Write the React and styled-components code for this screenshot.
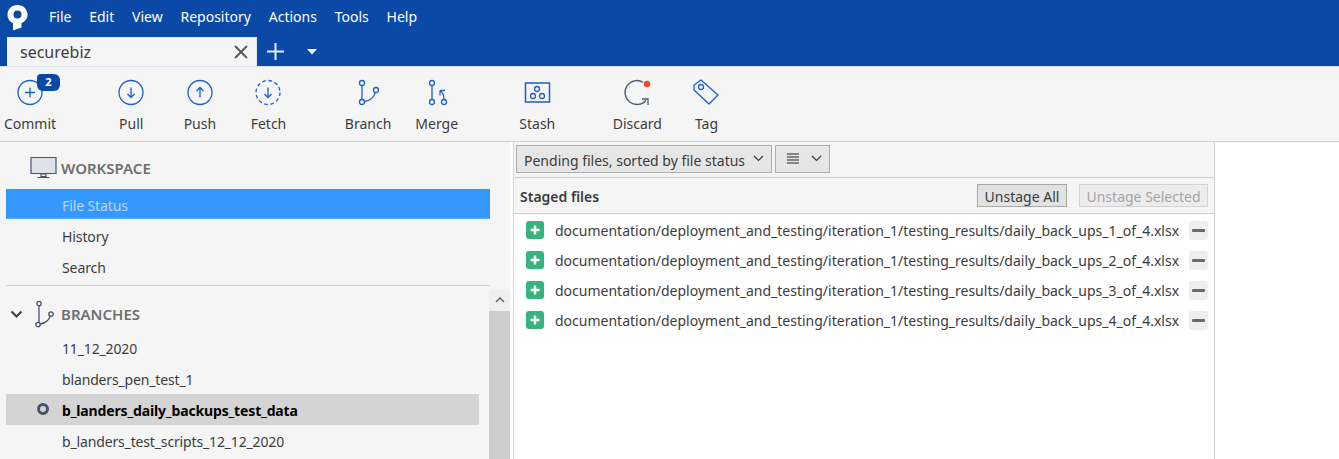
import React from "react";
import styled, { createGlobalStyle } from "styled-components";

const Global = createGlobalStyle`
  html, body { margin: 0; padding: 0; height: 100%; overflow: hidden; background: #fff; }
  #root { height: 459px; width: 1339px; overflow: hidden; }
  * { box-sizing: border-box; }
  body { font-family: "Noto Sans", "Open Sans", sans-serif; font-size: 14px; color: #3c3c3c; }
`;

const Shell = styled.div`display:flex;flex-direction:column;width:1339px;height:459px;overflow:hidden;`;
const TitleBar = styled.div`background:#0a49a6;height:66px;flex:none;display:flex;flex-direction:column;`;
const MenuRow = styled.div`height:37px;display:flex;align-items:center;flex:none;`;
const Logo = styled.svg`width:21px;height:28px;margin:0 0 0 7px;flex:none;display:block;`;
const Menu = styled.nav`display:flex;gap:17.8px;margin-left:21px;padding-bottom:4px;color:#fff;font-size:14px;`;
const TabRow = styled.div`height:29px;display:flex;align-items:stretch;padding-left:7px;`;
const Tab = styled.div`width:250px;background:#f5f5f5;display:flex;align-items:center;justify-content:space-between;padding:0 7px 0 13px;font-size:16px;color:#3c3c3c;border-top:1px solid #dfe8f3;border-right:1px solid #dfe8f3;`;
const TabIcon = styled.svg`flex:none;display:block;`;
const TabTools = styled.div`display:flex;align-items:center;margin-left:9px;gap:22px;`;

const Toolbar = styled.div`height:76px;flex:none;background:#f5f5f5;border-top:1px solid #dbe3ee;border-bottom:1px solid #d0d0d0;display:flex;`;
const ToolGroup = styled.div`display:flex;margin-left:${p => p.$gap}px;`;
const Tool = styled.div`width:${p => p.$w || 68.6}px;display:flex;flex-direction:column;align-items:center;position:relative;padding-top:10px;font-size:14px;color:#3c3c3c;`;
const ToolIcon = styled.svg`width:30px;height:30px;display:block;margin-bottom:7px;fill:none;stroke:#1d5fc9;stroke-width:1.3;`;
const Badge = styled.span`position:absolute;left:37px;top:7px;width:23px;height:17px;border-radius:4px 6px 6px 6px;background:#0a49a6;color:#fff;font-size:11px;font-weight:700;line-height:16px;text-align:center;`;

const Body = styled.div`flex:1;display:flex;min-height:0;`;
const Sidebar = styled.aside`width:510px;flex:none;background:#f5f5f5;position:relative;padding-left:6px;overflow:hidden;`;
const WorkspaceHead = styled.div`height:47px;display:flex;align-items:center;padding:4px 0 0 24px;font-weight:600;font-size:15px;color:#6f6f6f;`;
const BranchHead = styled.div`height:36px;margin-top:10px;display:flex;align-items:center;padding-left:4px;font-weight:600;font-size:15px;color:#6f6f6f;`;
const HeadIcon = styled.svg`flex:none;display:block;margin-right:${p => p.$mr || 4}px;`;
const Chev = styled.svg`flex:none;display:block;margin-right:9px;`;
const NavItem = styled.div`height:31px;width:484px;display:flex;align-items:center;padding:3px 0 0 56px;font-size:14px;letter-spacing:-.1px;color:#3c3c3c;`;
const ActiveNav = styled(NavItem)`height:30px;background:#3399ff;color:#c3d3e6;border-bottom:1px solid #5aabff;`;
const Rule = styled.hr`border:0;border-top:1px solid #cfcfcf;margin:4px 0 0;width:484px;`;
const BranchItem = styled(NavItem)`width:473px;position:relative;padding-top:2px;letter-spacing:-.15px;`;
const Current = styled(BranchItem)`background:#d4d4d4;font-weight:700;color:#000;`;
const Dot = styled.span`position:absolute;left:31px;top:9px;width:12px;height:12px;border-radius:50%;border:3px solid #47526b;`;
const Scroll = styled.div`position:absolute;left:489px;top:147px;width:21px;bottom:0;display:flex;flex-direction:column;`;
const ScrollBtn = styled.div`height:22px;background:#f0f0f0;display:flex;align-items:center;justify-content:center;`;
const ScrollThumb = styled.div`flex:1;background:#cdcdcd;`;

const Main = styled.main`width:702px;flex:none;margin-left:3px;display:flex;flex-direction:column;border-left:1px solid #d8d8d8;border-right:1px solid #d0d0d0;`;
const FilterBar = styled.div`height:36px;flex:none;background:#f5f5f5;border-bottom:1px solid #d0d0d0;display:flex;align-items:center;gap:3px;padding:0 0 2px 2px;`;
const Select = styled.div`height:28px;background:#e6e6e6;border:1px solid #aeaeae;display:flex;align-items:center;font-size:14px;color:#3c3c3c;width:${p => p.$w}px;padding:0 7px 0 ${p => p.$pl || 7}px;justify-content:space-between;`;
const SelectText = styled.span`padding-top:3px;`;
const StagedHead = styled.div`height:36px;flex:none;background:#f5f5f5;border-bottom:1px solid #d0d0d0;display:flex;align-items:center;padding:0 6px 0 6px;`;
const StagedTitle = styled.div`font-weight:600;font-size:14px;color:#3c3c3c;flex:1;padding-top:2px;`;
const Btn = styled.div`height:23px;display:flex;align-items:center;justify-content:center;padding-top:2px;font-size:14px;width:${p => p.$w}px;margin-left:${p => p.$ml || 0}px;border:1px solid ${p => p.$off ? "#d4d4d4" : "#a8a8a8"};background:${p => p.$off ? "#ececec" : "#e2e2e2"};color:${p => p.$off ? "#a5a5a5" : "#3c3c3c"};`;
const Files = styled.div`flex:1;background:#fff;padding-top:1px;`;
const FileRow = styled.div`height:30px;display:flex;align-items:center;padding-left:12px;`;
const AddIcon = styled.svg`flex:none;display:block;width:18px;height:18px;`;
const FileName = styled.div`font-size:14px;color:#3c3c3c;margin-left:11px;width:634px;white-space:nowrap;`;
const Minus = styled.div`width:19px;height:19px;border-radius:3px;background:#eeeeee;display:flex;align-items:center;justify-content:center;flex:none;&::before{content:"";width:13px;height:3px;background:#6a6a6a;border-radius:1px;}`;
const Side = styled.div`flex:1;background:#fff;`;

const tools1 = [
  ["Pull", <><circle cx="15" cy="15.5" r="12" /><path d="M15 10.500v10M11.500 17l3.500 3.500 3.500-3.500" /></>],
  ["Push", <><circle cx="15" cy="15.5" r="12" /><path d="M15 20.500v-10M11.500 14l3.500-3.500 3.500 3.500" /></>],
  ["Fetch", <><circle cx="15" cy="15.5" r="12" strokeDasharray="3.600 2.700" /><path d="M15 10.500v10M11.500 17l3.500 3.500 3.500-3.500" /></>],
];
const Chevron = () => <svg width="11" height="7" viewBox="0 0 11 7"><path d="M1 1l4.500 4.500L10 1" fill="none" stroke="#3c3c3c" strokeWidth="1.200" /></svg>;

export default function App() {
  return (
    <Shell>
      <Global />
      <TitleBar>
        <MenuRow>
          <Logo viewBox="0 0 21 28">
            <path fill="#fff" fillRule="evenodd" d="M10.500 0C4.700 0 .5 4.200.5 9.800c0 3.800 2.300 7 5.500 8.400V25.500l8.500-3v-4.400c3.500-1.400 6-4.500 6-8.300C20.500 4.200 16.300 0 10.500 0Zm0 5.500a4 4 0 1 1 0 8 4 4 0 0 1 0-8Z" />
          </Logo>
          <Menu>{["File","Edit","View","Repository","Actions","Tools","Help"].map(m => <span key={m}>{m}</span>)}</Menu>
        </MenuRow>
        <TabRow>
          <Tab>
            securebiz
            <TabIcon width="16" height="16" viewBox="0 0 16 16"><path d="M2 2l12 12M14 2 2 14" stroke="#555" strokeWidth="1.800" /></TabIcon>
          </Tab>
          <TabTools>
            <TabIcon width="19" height="19" viewBox="0 0 19 19"><path d="M9.500 1v17M1 9.500h17" stroke="#e4ecf6" strokeWidth="2" /></TabIcon>
            <TabIcon width="10" height="6" viewBox="0 0 10 6"><path d="M0 0h10L5 5.500Z" fill="#fff" /></TabIcon>
          </TabTools>
        </TabRow>
      </TitleBar>

      <Toolbar>
        <Tool $w={60}>
          <ToolIcon viewBox="0 0 30 30"><circle cx="15" cy="15.5" r="12" /><path d="M15 10.500v10M10 15.500h10" /></ToolIcon>
          <Badge>2</Badge>
          Commit
        </Tool>
        <ToolGroup $gap={37}>
          {tools1.map(([l, d]) => <Tool key={l}><ToolIcon viewBox="0 0 30 30">{d}</ToolIcon>{l}</Tool>)}
        </ToolGroup>
        <ToolGroup $gap={31}>
          <Tool><ToolIcon viewBox="0 0 30 30"><circle cx="9" cy="6" r="2.500" /><circle cx="9" cy="25" r="2.500" /><circle cx="23" cy="13" r="2.500" /><path d="M9 8.500v14M11.500 24.500C17 24 21 20 22.300 15.500" /></ToolIcon>Branch</Tool>
          <Tool><ToolIcon viewBox="0 0 30 30"><circle cx="10" cy="6" r="2.500" /><circle cx="10" cy="25" r="2.500" /><circle cx="22" cy="25" r="2.500" /><path d="M10 8.500v14M22 22.500c0-4-1-7-4-9M18 13.500v5M18 13.500h5" /></ToolIcon>Merge</Tool>
        </ToolGroup>
        <ToolGroup $gap={32}>
          <Tool><ToolIcon viewBox="0 0 30 30"><path d="M3.500 6h24v19h-24z" strokeWidth="1.500" /><circle cx="15" cy="12" r="2.500" /><circle cx="11" cy="19" r="2.500" /><circle cx="20" cy="19" r="2.500" /></ToolIcon>Stash</Tool>
        </ToolGroup>
        <ToolGroup $gap={31}>
          <Tool $w={69.6}>
            <ToolIcon viewBox="0 0 30 30">
              <path d="M21 5.100A12 12 0 1 0 24 23.500" stroke="#4f5b70" />
              <path d="M20 22h6v6" stroke="#4f5b70" />
              <circle cx="25" cy="7" r="3.300" fill="#f4492c" stroke="none" />
            </ToolIcon>
            Discard
          </Tool>
          <Tool><ToolIcon viewBox="0 0 30 30"><path d="M3 8 10 3 27 18 18 27 3 13Z" strokeLinejoin="round" /><circle cx="10" cy="10" r="2.500" /></ToolIcon>Tag</Tool>
        </ToolGroup>
      </Toolbar>

      <Body>
        <Sidebar>
          <WorkspaceHead>
            <HeadIcon $mr={4} width="27" height="24" viewBox="0 0 27 24">
              <path d="M1 1.500h25v16H1z" fill="#dde2ea" stroke="#47526b" strokeWidth="1.200" />
              <path d="M11 18h5v2.500h-5zM7.500 21.500h12" stroke="#47526b" strokeWidth="1.200" fill="none" />
            </HeadIcon>
            WORKSPACE
          </WorkspaceHead>
          <ActiveNav>File Status</ActiveNav>
          <NavItem>History</NavItem>
          <NavItem>Search</NavItem>
          <Rule />
          <BranchHead>
            <Chev width="13" height="9" viewBox="0 0 13 9"><path d="M1.500 1.500 6.500 6.500l5-5" fill="none" stroke="#444" strokeWidth="2.200" /></Chev>
            <HeadIcon $mr={5} width="24" height="28" viewBox="0 0 24 28">
              <g fill="none" stroke="#47526b" strokeWidth="1.300"><circle cx="7" cy="3.500" r="2.200" /><circle cx="6" cy="24.500" r="2.200" /><circle cx="19" cy="14" r="2.200" /><path d="M7 5.700 V22.300M8 24c6-1 9-4 10.300-8" /></g>
            </HeadIcon>
            BRANCHES
          </BranchHead>
          <BranchItem>11_12_2020</BranchItem>
          <BranchItem>blanders_pen_test_1</BranchItem>
          <Current><Dot />b_landers_daily_backups_test_data</Current>
          <BranchItem>b_landers_test_scripts_12_12_2020</BranchItem>
          <Scroll>
            <ScrollBtn><svg width="10" height="6" viewBox="0 0 10 6"><path d="M1 5 5 1l4 4" fill="none" stroke="#666" strokeWidth="1.500" /></svg></ScrollBtn>
            <ScrollThumb />
          </Scroll>
        </Sidebar>

        <Main>
          <FilterBar>
            <Select $w={256}>
              <SelectText>Pending files, sorted by file status</SelectText>
              <Chevron />
            </Select>
            <Select $w={55} $pl={11}>
              <svg width="12" height="11" viewBox="0 0 12 11"><path d="M0 1h12M0 4h12M0 7h12M0 10h12" stroke="#222" strokeWidth="1.200" /></svg>
              <Chevron />
            </Select>
          </FilterBar>
          <StagedHead>
            <StagedTitle>Staged files</StagedTitle>
            <Btn $w={90}>Unstage All</Btn>
            <Btn $w={129} $ml={12} $off>Unstage Selected</Btn>
          </StagedHead>
          <Files>
            {[1,2,3,4].map(n => (
              <FileRow key={n}>
                <AddIcon viewBox="0 0 18 18"><rect width="18" height="18" rx="3" fill="#36b37e" /><path d="M9 4.500v9M4.500 9h9" stroke="#fff" strokeWidth="2.500" /></AddIcon>
                <FileName>documentation/deployment_and_testing/iteration_1/testing_results/daily_back_ups_{n}_of_4.xlsx</FileName>
                <Minus />
              </FileRow>
            ))}
          </Files>
        </Main>
        <Side />
      </Body>
    </Shell>
  );
}
